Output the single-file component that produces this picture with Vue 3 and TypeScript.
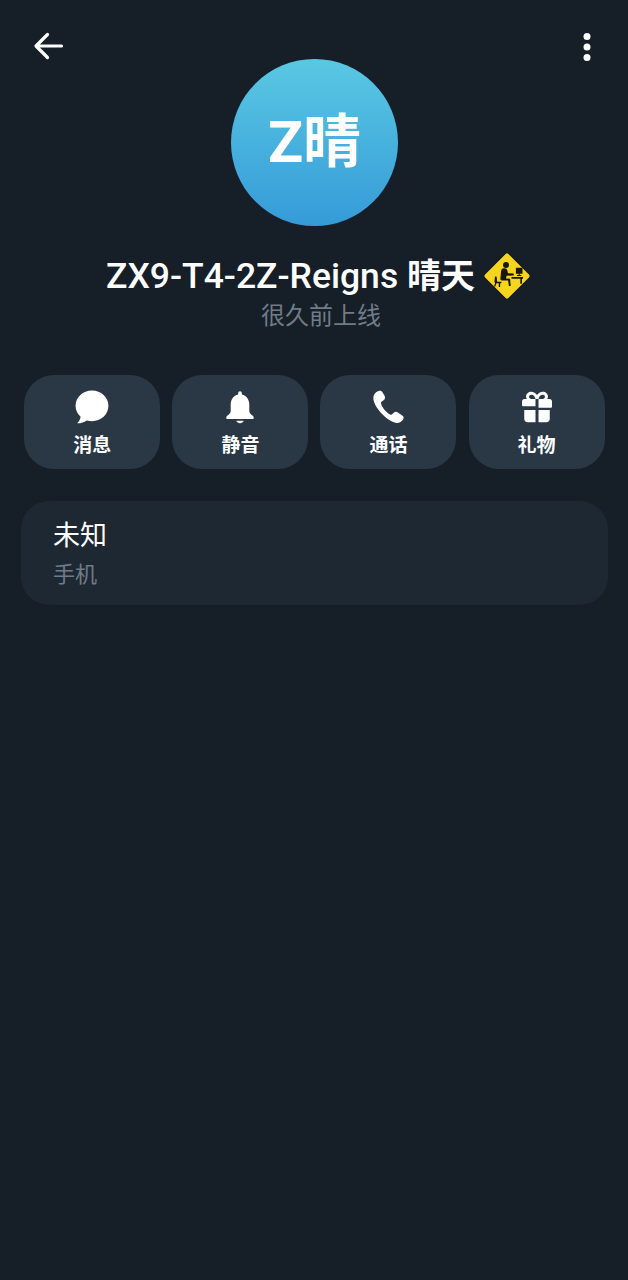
<script setup lang="ts">
interface Action {
  label: string
  size: number
  icon: string
}

const actions: Action[] = [
  {
    label: '消息',
    size: 42,
    icon: 'M12 2.600c-5.200 0-9.400 3.900-9.400 8.700 0 2.500 1.100 4.700 2.900 6.300-.2 1.400-.8 2.600-2 3.700 1.900.1 3.900-.5 5.500-1.600 1 .3 1.900.4 3 .4 5.200 0 9.400-3.900 9.400-8.800S17.200 2.600 12 2.600z',
  },
  {
    label: '静音',
    size: 36,
    icon: 'M12 1.500c-.7 0-1.200.5-1.200 1.200v.9C7.700 4.300 5.800 7 5.800 10.200v4.300c0 1.300-.6 2.200-2.300 3.400-.5.4-.7.8-.7 1.200 0 .5.4.9 1 .9h16.400c.6 0 1-.4 1-.9 0-.4-.2-.8-.7-1.200-1.700-1.200-2.300-2.100-2.300-3.400v-4.300c0-3.200-1.900-5.900-5-6.600v-.9c0-.7-.5-1.200-1.200-1.200zM9.500 21.200c.4 1 1.400 1.600 2.500 1.600s2.100-.6 2.500-1.600z',
  },
  {
    label: '通话',
    size: 38,
    icon: 'M6.500 1.800c-1.700.4-3.400 1.900-3.700 3.700-.3 2 .7 5 3.300 8.400 3.200 4.200 7 7 10.500 8 1.900.5 3.800-.2 4.900-1.800.6-.9.5-1.900-.3-2.500l-3-2.200c-.8-.6-1.700-.5-2.400.1l-1.400 1.200c-.3.2-.6.300-1 .1-1.200-.6-2.700-1.900-3.800-3.300-1-1.300-1.800-2.800-2-3.900-.1-.4 0-.7.3-.9l1.500-1.100c.8-.6 1-1.500.6-2.400L8.600 2.900c-.4-.9-1.200-1.300-2.100-1.100z',
  },
  {
    label: '礼物',
    size: 36,
    icon: 'M8.200 1.800c-2 0-3.500 1.400-3.500 3.200 0 .6.200 1.200.5 1.700H3.600c-.9 0-1.600.7-1.600 1.600v2.300c0 .5.400.9.900.9h8.100V6.700h2v5.800h8.100c.5 0 .9-.4.900-.9V8.300c0-.9-.7-1.600-1.600-1.600h-1.600c.3-.5.500-1.100.5-1.700 0-1.800-1.500-3.200-3.500-3.200-1.500 0-3 .9-3.800 2.200-.8-1.300-2.300-2.200-3.800-2.200zm0 2c1.400 0 2.600 1.300 2.800 2.900H8.200c-.9 0-1.500-.7-1.500-1.500 0-.8.600-1.400 1.500-1.400zm7.600 0c.9 0 1.500.6 1.500 1.400 0 .8-.6 1.500-1.500 1.500H13c.2-1.600 1.400-2.900 2.800-2.900zM3.500 14v6c0 1.200 1 2.200 2.200 2.200H11V14zm9.500 0v8.200h5.300c1.200 0 2.200-1 2.200-2.200v-6z',
  },
]
</script>

<template>
  <div class="page">
    <header class="topbar">
      <button class="icon-btn" aria-label="返回">
        <svg width="32" height="32" viewBox="0 0 32 32" fill="none" stroke="#fff" stroke-width="3.200" stroke-linecap="round" stroke-linejoin="round">
          <path d="M3.500 15h25M14.500 3.500 3 15l11.500 11.500" />
        </svg>
      </button>
      <button class="icon-btn" aria-label="更多">
        <svg width="12" height="30" viewBox="0 0 12 30" fill="#fff">
          <circle cx="6" cy="4.500" r="3.500" />
          <circle cx="6" cy="15" r="3.500" />
          <circle cx="6" cy="25.500" r="3.500" />
        </svg>
      </button>
    </header>

    <section class="profile">
      <div class="avatar">Z晴</div>
      <div class="name-row">
        <span class="name">ZX9-T4-2Z-Reigns <b class="name-cjk">晴天</b></span>
        <svg class="badge" width="46" height="46" viewBox="0 0 46 46">
          <rect x="6" y="6" width="34" height="34" rx="2.500" transform="rotate(45 23 23)" fill="#f5d51e" stroke="#1a1608" stroke-width="1" />
          <g transform="translate(-1.100 -2.850) scale(1.100)">
            <circle cx="21" cy="13.500" r="2.700" fill="#1a1608" />
            <path fill="#1a1608" d="M18.500 16.500c1.800-.5 3.300.3 3.700 2l.6 2.500 5.200.2v1.800l-6.500.3-.5 2.500 3.700.2.600 6.500h-1.700l-.7-4.800-5.700-.2c-.9 0-1.400-.6-1.300-1.500l.6-6.500c.1-1.400.7-2.600 2-3zM11 24h1.400l.6 4.800h3.800v1.300h-1.100v3.400h-1.300v-3.400h-2.100l-1 3h-1.200l1-3.300c-.4-.4-.6-.9-.6-1.400zM26 24.500h10.500v1.600h-1v4.500H34v-4.500h-8zM30 16h6v5.500h-2.500v1h1.500v1H31v-1h1.500v-1H30z" />
          </g>
        </svg>
      </div>
      <div class="status">很久前上线</div>
    </section>

    <nav class="actions">
      <button v-for="action in actions" :key="action.label" class="action">
        <span class="action-icon">
          <svg :width="action.size" :height="action.size" viewBox="0 0 24 24" fill="#fff">
            <path :d="action.icon" />
          </svg>
        </span>
        <span class="action-label">{{ action.label }}</span>
      </button>
    </nav>

    <section class="info-card">
      <div class="info-value">未知</div>
      <div class="info-label">手机</div>
    </section>
  </div>
</template>

<style>
body {
  background: #161e28;
}
</style>

<style scoped>
.page {
  box-sizing: border-box;
  width: 628px;
  height: 1280px;
  padding: 0 20px;
  background: #161e28;
  color: #fff;
  font-family: Roboto, "Noto Sans CJK SC", sans-serif;
  overflow: hidden;
}

.topbar {
  display: flex;
  align-items: center;
  justify-content: space-between;
  height: 59px;
  padding: 0 15px 0 13px;
}

.icon-btn {
  display: flex;
  align-items: center;
  padding: 0;
  border: 0;
  background: none;
  margin-top: 35px;
}

.profile {
  display: flex;
  flex-direction: column;
  align-items: center;
}

.avatar {
  display: flex;
  align-items: center;
  justify-content: center;
  box-sizing: border-box;
  width: 167px;
  height: 167px;
  margin-left: 1px;
  padding-bottom: 12px;
  border-radius: 50%;
  background: linear-gradient(#5ac8e3, #359bd8);
  font-size: 58px;
  font-weight: 700;
}

.name-row {
  display: flex;
  align-items: center;
  gap: 9px;
  height: 46px;
  margin-top: 27px;
  margin-left: 8px;
}

.name {
  padding-bottom: 6px;
  font-size: 35.500px;
  font-weight: 500;
  white-space: nowrap;
}

.name-cjk {
  font-size: 34px;
  font-weight: 700;
}

.status {
  margin-top: 2px;
  margin-left: 14px;
  font-size: 24px;
  line-height: 30px;
  color: #6f7c88;
}

.actions {
  display: grid;
  grid-template-columns: repeat(4, 136px);
  gap: 12.100px;
  margin: 44px 0 0 4.300px;
}

.action {
  display: flex;
  flex-direction: column;
  align-items: center;
  height: 94px;
  padding: 14px 0 0;
  border: 0;
  border-radius: 30px;
  background: #2a3744;
  color: #fff;
  font-family: inherit;
}

.action-icon {
  display: flex;
  align-items: center;
  justify-content: center;
  height: 36px;
}

.action-label {
  margin-top: 9px;
  font-size: 19px;
  line-height: 24px;
  font-weight: 700;
}

.info-card {
  box-sizing: border-box;
  width: 587px;
  height: 104px;
  margin: 32px 0 0 1px;
  padding: 16px 32px;
  border-radius: 28px;
  background: #1e2833;
}

.info-value {
  font-size: 27px;
  line-height: 38px;
}

.info-label {
  margin-top: 5px;
  font-size: 22px;
  line-height: 30px;
  color: #6f7c88;
}
</style>
